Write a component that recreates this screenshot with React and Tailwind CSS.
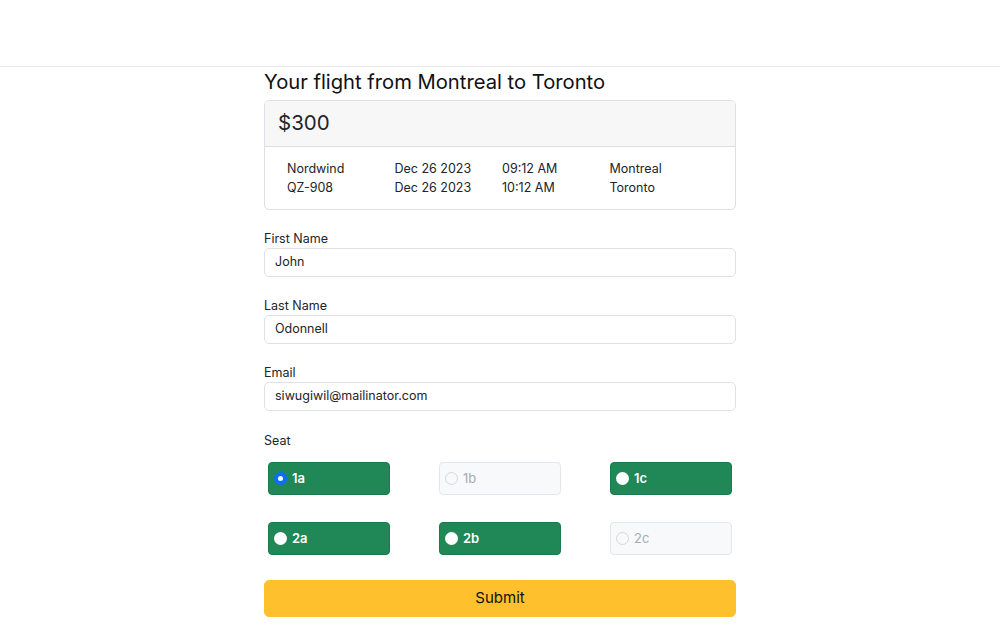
import React from "react";

function Radio({ checked, disabled }) {
  if (checked) {
    return (
      <span className="w-[13px] h-[13px] rounded-full bg-[#0d6efd] flex items-center justify-center shrink-0">
        <span className="w-[5px] h-[5px] rounded-full bg-white" />
      </span>
    );
  }
  if (disabled) {
    return <span className="w-[13px] h-[13px] rounded-full border border-[#d5d8dc] bg-[#f8f9fa] shrink-0" />;
  }
  return <span className="w-[13px] h-[13px] rounded-full bg-white shrink-0" />;
}

function Seat({ label, checked, disabled }) {
  return (
    <div
      className={
        "w-[122px] h-[33px] rounded-[4px] flex items-center gap-[5px] pl-[5px] text-[13px] " +
        (disabled
          ? "bg-[#f8f9fa] border border-[#e3e6ea] text-[#a7abb0]"
          : "bg-[#208756] border border-[#1b7a4c] text-white font-semibold")
      }
    >
      <Radio checked={checked} disabled={disabled} />
      <span>{label}</span>
    </div>
  );
}

function Field({ label, value }) {
  return (
    <div className="flex flex-col">
      <label className="text-[12.5px] leading-[18px] text-[#212529]">{label}</label>
      <div className="h-[29px] border border-[#dee2e6] rounded-[5px] flex items-center px-[10px] text-[12.5px] text-[#212529]">
        {value}
      </div>
    </div>
  );
}

export default function App() {
  return (
    <div className="min-h-[625px] bg-white text-[#212529]" style={{ fontFamily: "Inter, 'Liberation Sans', sans-serif" }}>
      <div className="h-[67px] border-b border-[#e9ecef]" />
      <div className="w-[472px] mx-auto">
        <h1 className="text-[20.2px] leading-[30px] mb-[3px] text-[#111]">Your flight from Montreal to Toronto</h1>
        <div className="border border-[#dcdfe3] rounded-[5px] overflow-hidden">
          <div className="h-[46px] bg-[#f7f7f7] border-b border-[#dcdfe3] flex items-center px-[13px] text-[20.5px]">$300</div>
          <div className="pl-[22px] pt-[12px] pb-[12px] grid grid-cols-[107.5px_107.5px_107.5px_107.5px] text-[12.5px] leading-[19px]">
            <div>Nordwind</div>
            <div>Dec 26 2023</div>
            <div>09:12 AM</div>
            <div>Montreal</div>
            <div>QZ-908</div>
            <div>Dec 26 2023</div>
            <div>10:12 AM</div>
            <div>Toronto</div>
          </div>
        </div>
        <div className="mt-[20px] flex flex-col gap-[20px]">
          <Field label="First Name" value="John" />
          <Field label="Last Name" value="Odonnell" />
          <Field label="Email" value="siwugiwil@mailinator.com" />
        </div>
        <div className="mt-[21px] text-[12.5px] leading-[18px]">Seat</div>
        <div className="mt-[12px] px-[4px] flex flex-col gap-[27px]">
          <div className="flex justify-between">
            <Seat label="1a" checked />
            <Seat label="1b" disabled />
            <Seat label="1c" />
          </div>
          <div className="flex justify-between">
            <Seat label="2a" />
            <Seat label="2b" />
            <Seat label="2c" disabled />
          </div>
        </div>
        <button className="mt-[25px] w-full h-[37px] rounded-[5px] bg-[#ffc02d] border border-[#ffc02d] text-[15px] text-[#111]">
          Submit
        </button>
      </div>
    </div>
  );
}
